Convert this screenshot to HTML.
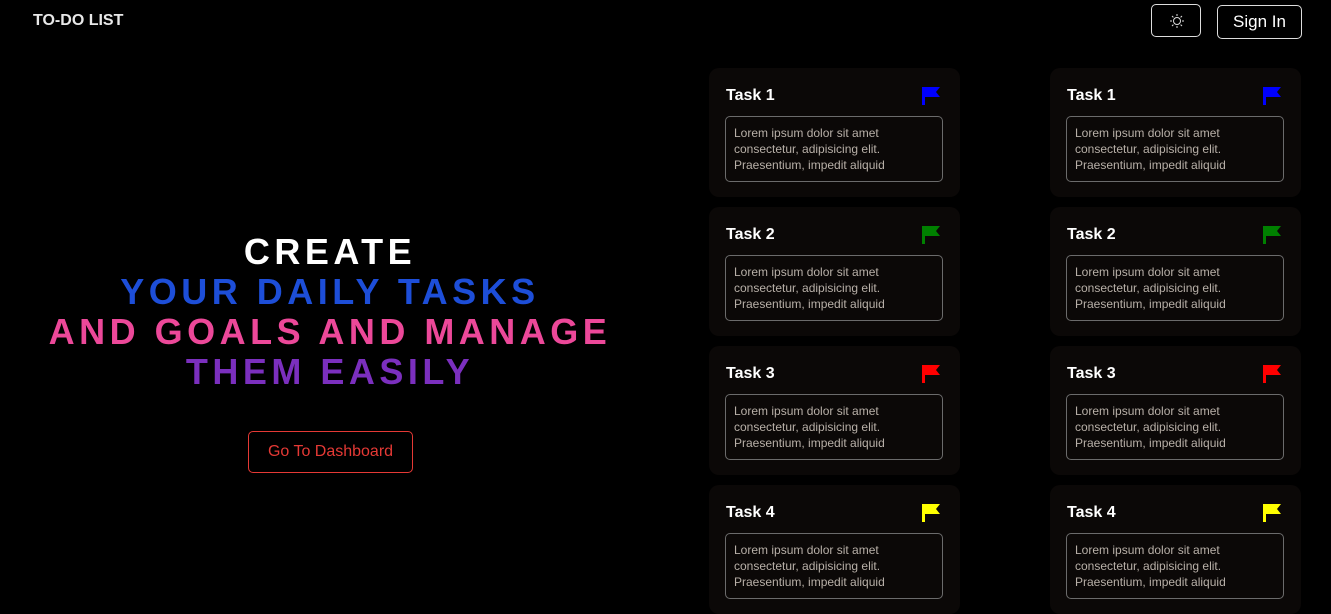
<!DOCTYPE html>
<html><head><style>
*{box-sizing:border-box;margin:0;padding:0}
body{width:1331px;height:605px;background:#000;overflow:hidden;font-family:"Liberation Sans",sans-serif;position:relative;color:#fff}
.logo{position:absolute;left:33px;top:12px;font-weight:bold;font-size:16px;color:#e8e8e8}
.theme{position:absolute;left:1151px;top:4px;width:50px;height:33px;border:1px solid #ddd;border-radius:5px}
.sign{position:absolute;left:1217px;top:5px;width:85px;height:34px;border:1px solid #ddd;border-radius:5px;font-size:17px;text-align:center;line-height:32px;color:#fff}
.hero{position:absolute;left:0;width:660px;top:232px;text-align:center;font-weight:bold;font-size:36px;letter-spacing:4.5px;line-height:40px}
.btn{position:absolute;left:248px;top:431px;width:165px;height:42px;border:1px solid #e53935;border-radius:5px;color:#e53935;font-size:16px;text-align:center;line-height:40px}
.card{position:absolute;width:251px;height:129px;background:#0b0807;border-radius:10px}
.card h3{position:absolute;left:17px;top:19px;font-size:16px;font-weight:bold}
.card svg{position:absolute;left:212px;top:18px}
.card .box{position:absolute;left:16px;top:48px;width:218px;height:66px;border:1px solid #6b6b6b;border-radius:5px;padding:8px 8px;font-size:12px;line-height:16px;color:#b8b0a8}
</style></head><body>
<div class="logo">TO-DO LIST</div>
<div class="theme"><svg width="50" height="33" viewBox="0 0 50 33"><g stroke="#ddd" stroke-width="1" fill="none"><circle cx="25" cy="16" r="3.5"/><path d="M25 9v2M25 21v2M18 16h2M30 16h2M20 11l1.4 1.4M28.6 19.6L30 21M20 21l1.4-1.4M28.6 12.4L30 11"/></g></svg></div>
<div class="sign">Sign In</div>
<div class="hero"><div>CREATE</div><div style="color:#1d4ed8">YOUR DAILY TASKS</div><div style="color:#ec4899">AND GOALS AND MANAGE</div><div style="color:#7b2fbe">THEM EASILY</div></div>
<div class="btn">Go To Dashboard</div>
<div id="cards"></div>
<script>
var cols=["#0000ff","#008000","#ff0000","#ffff00"],h="";
[709,1050].forEach(function(x){for(var i=0;i<4;i++){h+='<div class="card" style="left:'+x+'px;top:'+(68+i*139)+'px"><h3>Task '+(i+1)+'</h3><svg width="20" height="20" viewBox="0 0 20 20"><path d="M1 1h18l-4 5 4 5H4v8H1z" fill="'+cols[i]+'"/></svg><div class="box">Lorem ipsum dolor sit amet consectetur, adipisicing elit. Praesentium, impedit aliquid</div></div>';}});
document.getElementById("cards").innerHTML=h;
</script>
</body></html>
